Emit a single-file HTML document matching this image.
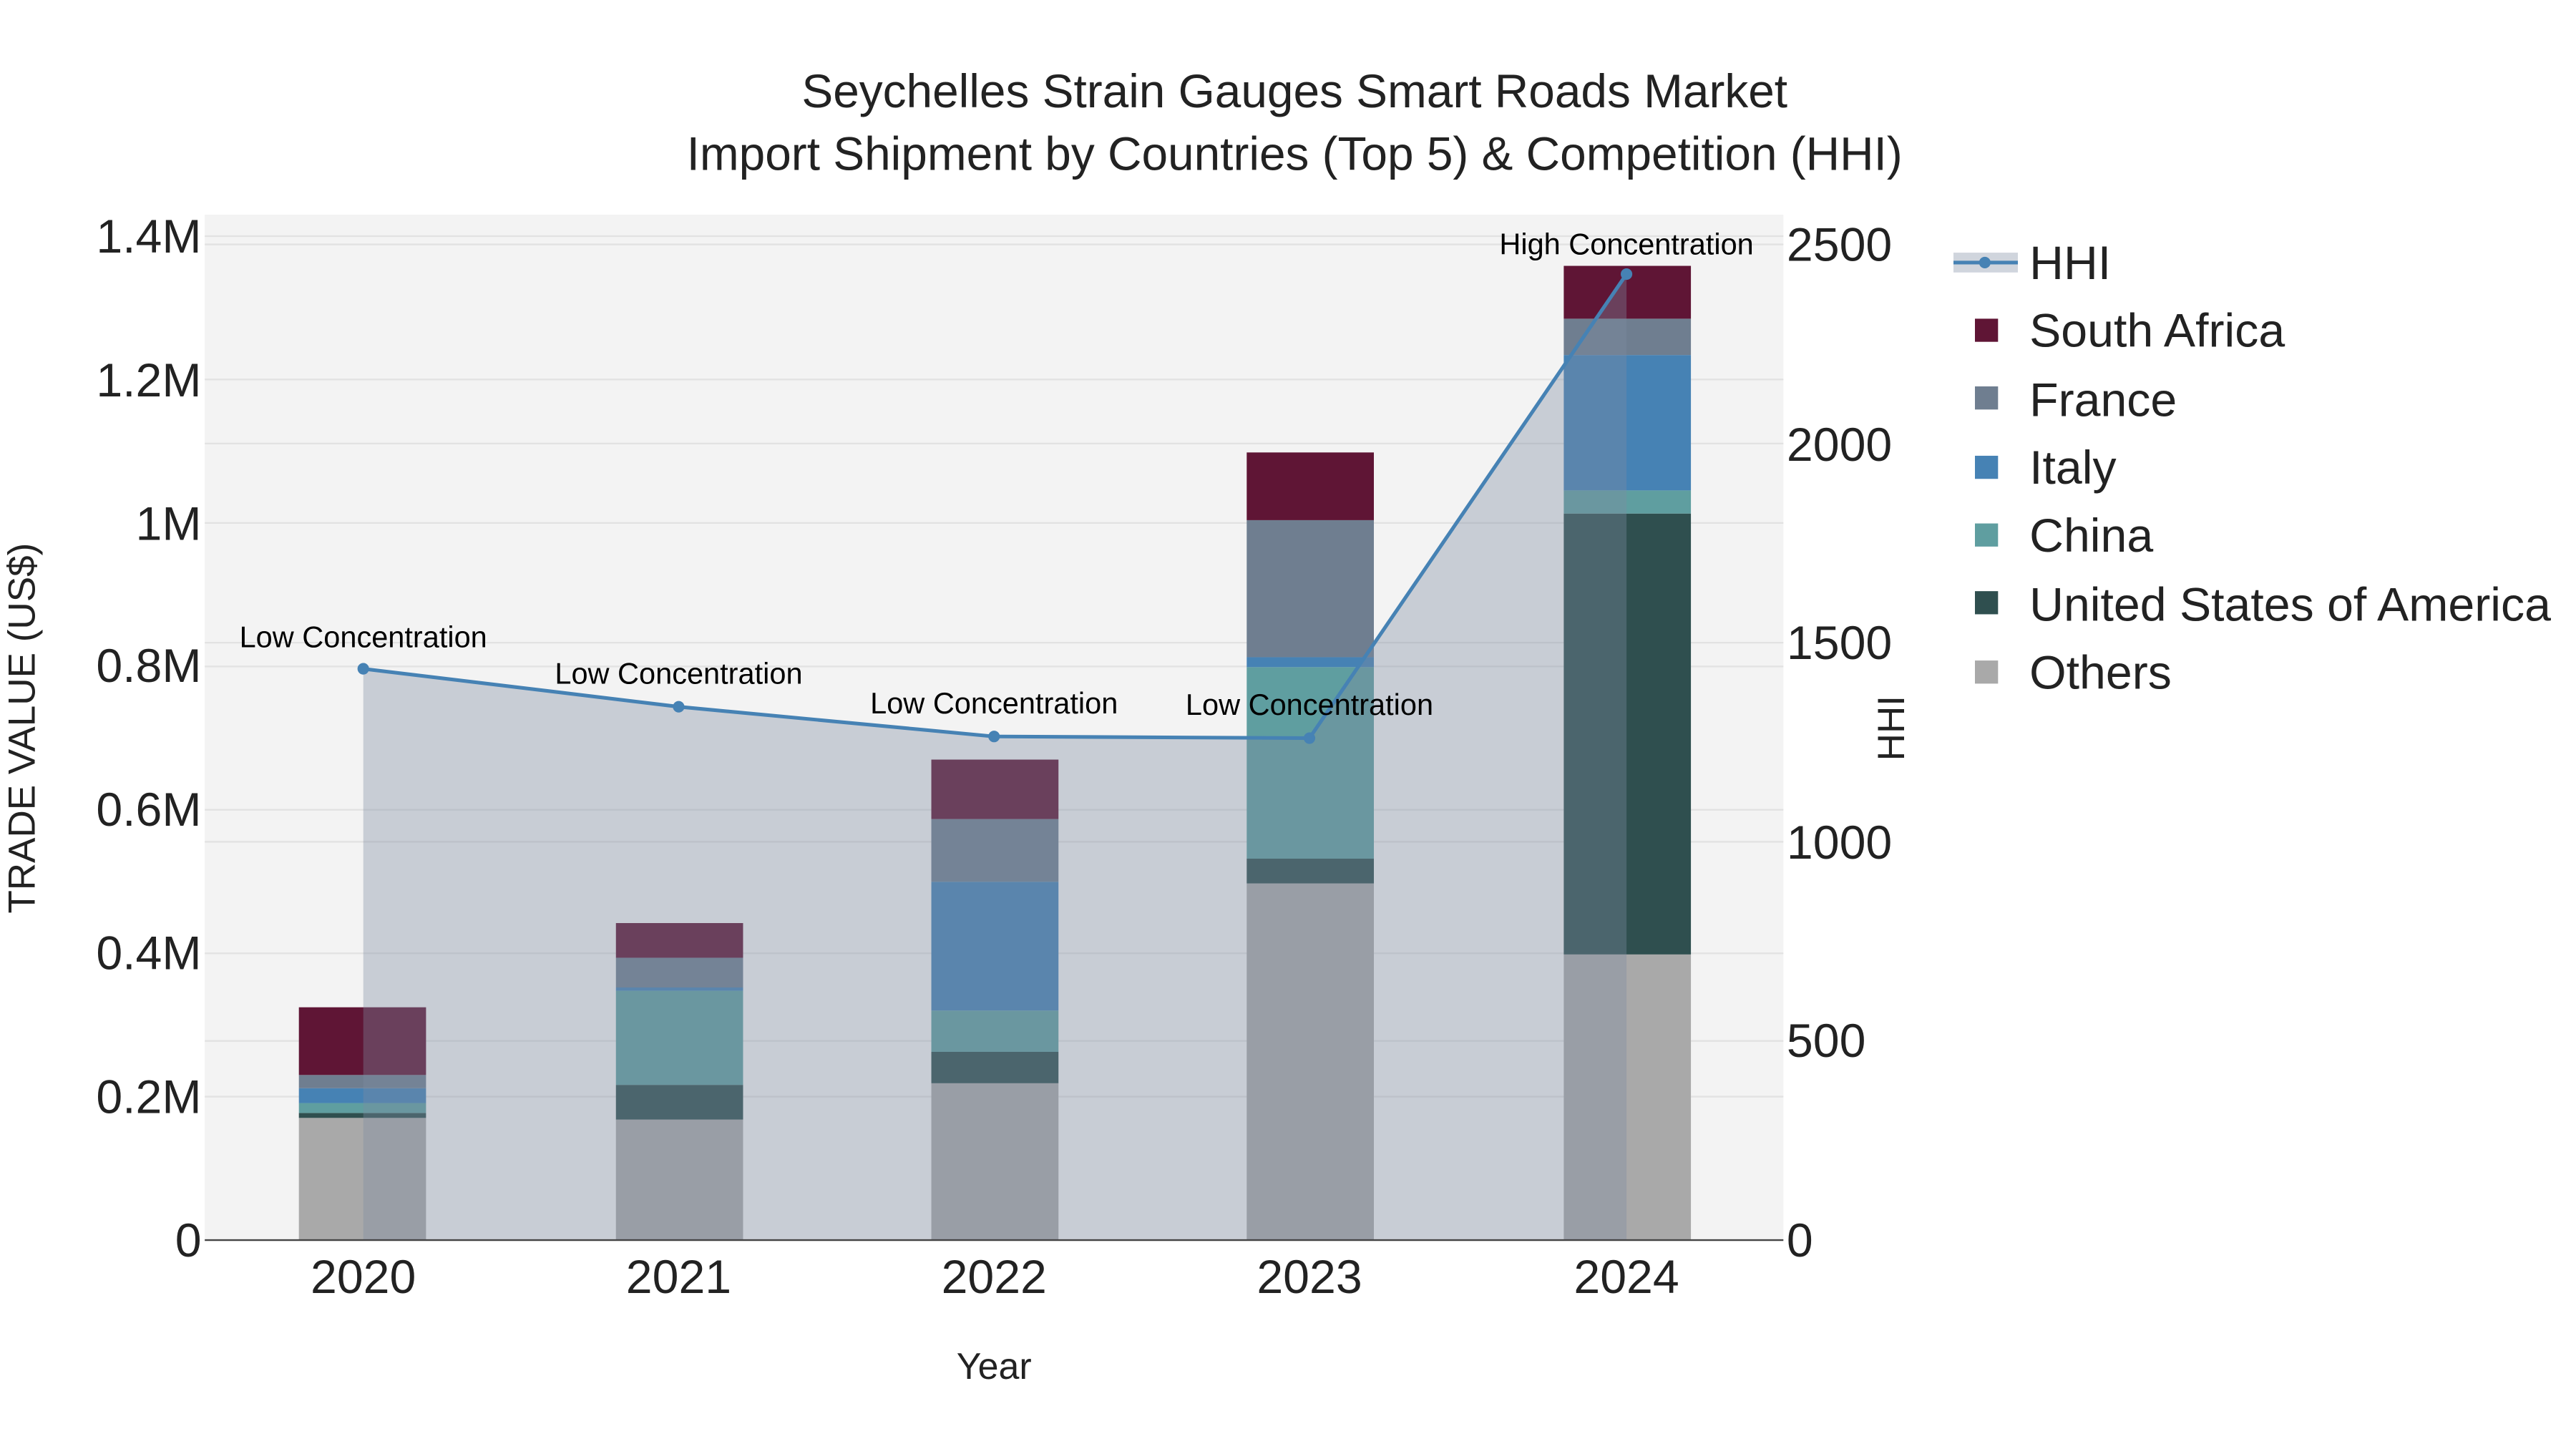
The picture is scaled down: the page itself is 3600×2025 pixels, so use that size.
<!DOCTYPE html>
<html><head><meta charset="utf-8"><style>html,body{margin:0;padding:0;background:#fff}svg{display:block}</style></head>
<body>
<svg width="3600" height="2025" viewBox="0 0 1560 877.5" xmlns="http://www.w3.org/2000/svg" font-family="Liberation Sans, sans-serif">
<rect x="0" y="0" width="1560" height="877.5" fill="#fff"/>
<rect x="124" y="130" width="956" height="621" fill="#f3f3f3"/>
<g stroke="#e2e2e2" stroke-width="1">
<line x1="124" x2="1080" y1="664.1" y2="664.1"/><line x1="124" x2="1080" y1="577.3" y2="577.3"/>
<line x1="124" x2="1080" y1="490.4" y2="490.4"/><line x1="124" x2="1080" y1="403.6" y2="403.6"/>
<line x1="124" x2="1080" y1="316.7" y2="316.7"/><line x1="124" x2="1080" y1="229.8" y2="229.8"/>
<line x1="124" x2="1080" y1="143" y2="143"/>
<line x1="124" x2="1080" y1="630.4" y2="630.4"/><line x1="124" x2="1080" y1="509.8" y2="509.8"/>
<line x1="124" x2="1080" y1="389.2" y2="389.2"/><line x1="124" x2="1080" y1="268.6" y2="268.6"/>
<line x1="124" x2="1080" y1="148" y2="148"/>
</g>
<g>
<rect x="181" y="677" width="77" height="74" fill="#a9a9a9"/><rect x="181" y="674" width="77" height="3" fill="#2f4f4f"/><rect x="181" y="668" width="77" height="6" fill="#5f9ea0"/><rect x="181" y="659" width="77" height="9" fill="#4682b4"/><rect x="181" y="651" width="77" height="8" fill="#6f7e90"/><rect x="181" y="610" width="77" height="41" fill="#5f1535"/>
<rect x="373" y="678" width="77" height="73" fill="#a9a9a9"/><rect x="373" y="657" width="77" height="21" fill="#2f4f4f"/><rect x="373" y="600" width="77" height="57" fill="#5f9ea0"/><rect x="373" y="598" width="77" height="2" fill="#4682b4"/><rect x="373" y="580" width="77" height="18" fill="#6f7e90"/><rect x="373" y="559" width="77" height="21" fill="#5f1535"/>
<rect x="564" y="656" width="77" height="95" fill="#a9a9a9"/><rect x="564" y="637" width="77" height="19" fill="#2f4f4f"/><rect x="564" y="612" width="77" height="25" fill="#5f9ea0"/><rect x="564" y="534" width="77" height="78" fill="#4682b4"/><rect x="564" y="496" width="77" height="38" fill="#6f7e90"/><rect x="564" y="460" width="77" height="36" fill="#5f1535"/>
<rect x="755" y="535" width="77" height="216" fill="#a9a9a9"/><rect x="755" y="520" width="77" height="15" fill="#2f4f4f"/><rect x="755" y="404" width="77" height="116" fill="#5f9ea0"/><rect x="755" y="398" width="77" height="6" fill="#4682b4"/><rect x="755" y="315" width="77" height="83" fill="#6f7e90"/><rect x="755" y="274" width="77" height="41" fill="#5f1535"/>
<rect x="947" y="578" width="77" height="173" fill="#a9a9a9"/><rect x="947" y="311" width="77" height="267" fill="#2f4f4f"/><rect x="947" y="297" width="77" height="14" fill="#5f9ea0"/><rect x="947" y="215" width="77" height="82" fill="#4682b4"/><rect x="947" y="193" width="77" height="22" fill="#6f7e90"/><rect x="947" y="161" width="77" height="32" fill="#5f1535"/>
</g>
<polygon points="220,751 220,405 411,428 602,446 793,447 985,166 985,751" fill="rgb(125,139,161)" fill-opacity="0.365"/>
<polyline points="220,405 411,428 602,446 793,447 985,166" fill="none" stroke="#4682b4" stroke-width="2.2"/>
<g fill="#4682b4"><circle cx="220" cy="405" r="3.5"/><circle cx="411" cy="428" r="3.5"/><circle cx="602" cy="446" r="3.5"/><circle cx="793" cy="447" r="3.5"/><circle cx="985" cy="166" r="3.5"/></g>
<line x1="124" x2="1080" y1="751" y2="751" stroke="#444" stroke-width="1"/>
<g font-size="18" fill="#000" text-anchor="middle">
<text x="220" y="392">Low Concentration</text><text x="411" y="414">Low Concentration</text><text x="602" y="432">Low Concentration</text><text x="793" y="433">Low Concentration</text><text x="985" y="154">High Concentration</text>
</g>
<g font-size="28.7" fill="#222" text-anchor="end">
<text x="122" y="761">0</text><text x="122" y="674">0.2M</text><text x="122" y="587">0.4M</text><text x="122" y="500">0.6M</text><text x="122" y="413">0.8M</text><text x="122" y="327">1M</text><text x="122" y="240">1.2M</text><text x="122" y="153">1.4M</text>
</g>
<g font-size="28.7" fill="#222" text-anchor="start">
<text x="1082" y="761">0</text><text x="1082" y="640">500</text><text x="1082" y="520">1000</text><text x="1082" y="399">1500</text><text x="1082" y="279">2000</text><text x="1082" y="158">2500</text>
</g>
<g font-size="28.7" fill="#222" text-anchor="middle">
<text x="220" y="783">2020</text><text x="411" y="783">2021</text><text x="602" y="783">2022</text><text x="793" y="783">2023</text><text x="985" y="783">2024</text>
</g>
<text x="602" y="835" font-size="22.5" fill="#222" text-anchor="middle">Year</text>
<text transform="translate(21,441) rotate(-90)" font-size="23" fill="#222" text-anchor="middle">TRADE VALUE (US$)</text>
<text transform="translate(1153,441) rotate(-90)" font-size="23" fill="#222" text-anchor="middle">HHI</text>
<g font-size="28.5" fill="#222" text-anchor="middle">
<text x="784" y="65">Seychelles Strain Gauges Smart Roads Market</text>
<text x="784" y="103">Import Shipment by Countries (Top 5) &amp; Competition (HHI)</text>
</g>
<rect x="1183" y="153" width="39" height="12" fill="rgb(125,139,161)" fill-opacity="0.365"/>
<line x1="1183" x2="1222" y1="159" y2="159" stroke="#4682b4" stroke-width="2.2"/><circle cx="1202" cy="159" r="3.5" fill="#4682b4"/>
<rect x="1196" y="193" width="14" height="14" fill="#5f1535"/>
<rect x="1196" y="234" width="14" height="14" fill="#6f7e90"/>
<rect x="1196" y="276" width="14" height="14" fill="#4682b4"/>
<rect x="1196" y="317" width="14" height="14" fill="#5f9ea0"/>
<rect x="1196" y="358" width="14" height="14" fill="#2f4f4f"/>
<rect x="1196" y="400" width="14" height="14" fill="#a9a9a9"/>
<g font-size="28.7" fill="#222">
<text x="1229" y="169">HHI</text><text x="1229" y="210">South Africa</text><text x="1229" y="252">France</text><text x="1229" y="293">Italy</text><text x="1229" y="334">China</text><text x="1229" y="376">United States of America</text><text x="1229" y="417">Others</text>
</g>
</svg>
</body></html>
